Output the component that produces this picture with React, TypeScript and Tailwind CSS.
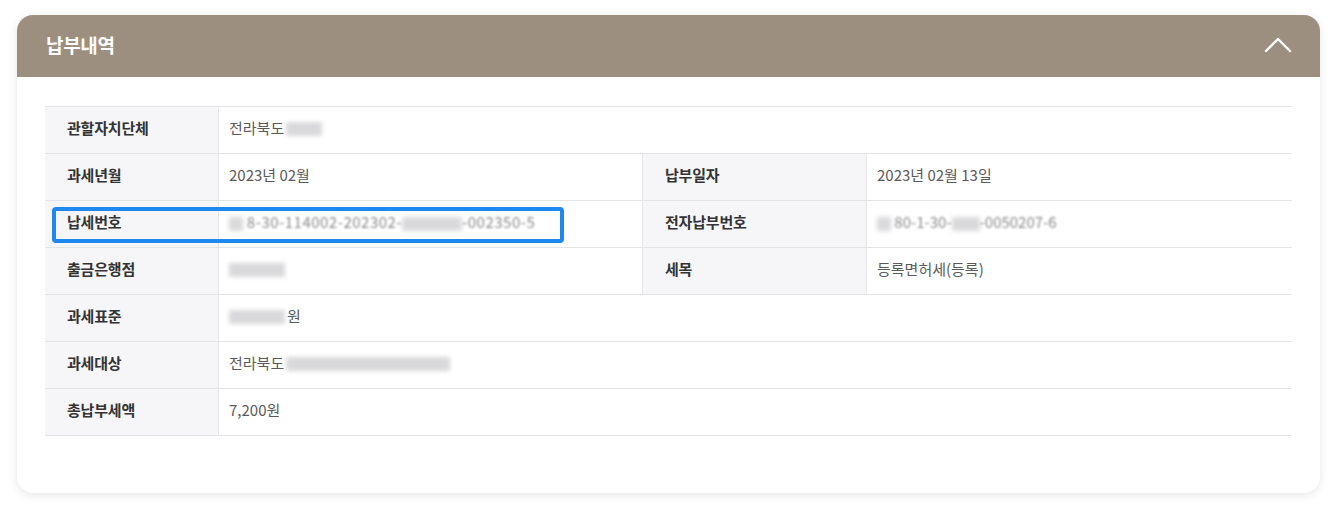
import React from 'react'

const font = { fontFamily: '"Noto Sans CJK KR", "Noto Sans", sans-serif' }

function Blur({ w, className = '' }: { w: number; className?: string }) {
  return (
    <span
      className={`inline-block h-[14px] align-middle bg-[#c9c9cc] blur-[2px] opacity-70 ${className}`}
      style={{ width: w }}
    />
  )
}

function Label({ children, wide = false }: { children: React.ReactNode; wide?: boolean }) {
  return (
    <div
      className={`${wide ? 'w-[224px]' : 'w-[174px]'} shrink-0 bg-[#f6f6f8] border-r border-[#e6e6e9] pl-[22px] pb-[3px] flex items-center text-[15px] font-bold text-[#333] tracking-[-0.2px]`}
    >
      {children}
    </div>
  )
}

function Value({ children, className = '' }: { children: React.ReactNode; className?: string }) {
  return (
    <div className={`pl-[10px] pb-[3px] flex items-center text-[15px] text-[#5a5a5a] ${className}`}>
      {children}
    </div>
  )
}

function Row({ children }: { children: React.ReactNode }) {
  return <div className="flex h-[47px] border-b border-[#e4e4e7]">{children}</div>
}

export default function App() {
  return (
    <div className="w-[1334px] h-[518px] bg-white pt-[15px] px-[17px]" style={font}>
      <div className="w-[1303px] h-[478px] rounded-[16px] bg-white shadow-[0_2px_10px_rgba(0,0,0,0.10)] overflow-hidden">
        <div className="h-[62px] bg-[#9c8f80] flex items-center justify-between pl-[29px] pr-[28px] pb-[2px]">
          <span className="text-white text-[19px] font-bold tracking-[-0.3px]">납부내역</span>
          <svg width="28" height="18" viewBox="0 0 28 18" fill="none">
            <path d="M2 15 L14 3 L26 15" stroke="white" strokeWidth="2.4" strokeLinecap="round" strokeLinejoin="round" />
          </svg>
        </div>

        <div className="px-[28px] pt-[29px]">
          <div className="relative border-t border-[#e4e4e7]">
            <Row>
              <Label>관할자치단체</Label>
              <Value>
                전라북도<Blur w={36} className="ml-[2px]" />
              </Value>
            </Row>
            <Row>
              <Label>과세년월</Label>
              <Value className="w-[424px] border-r border-[#e6e6e9]">2023년 02월</Value>
              <Label wide>납부일자</Label>
              <Value>2023년 02월 13일</Value>
            </Row>
            <Row>
              <Label>납세번호</Label>
              <Value className="w-[424px] border-r border-[#e6e6e9]">
                <span className="blur-[1px] text-[#8a8a8a] tracking-[0.5px]">
                  <Blur w={14} /> 8-30-114002-202302-<Blur w={60} />-002350-5
                </span>
              </Value>
              <Label wide>전자납부번호</Label>
              <Value>
                <span className="blur-[1px] text-[#8a8a8a]">
                  <Blur w={14} /> 80-1-30-<Blur w={28} />-0050207-6
                </span>
              </Value>
            </Row>
            <Row>
              <Label>출금은행점</Label>
              <Value className="w-[424px] border-r border-[#e6e6e9]">
                <Blur w={56} />
              </Value>
              <Label wide>세목</Label>
              <Value>등록면허세(등록)</Value>
            </Row>
            <Row>
              <Label>과세표준</Label>
              <Value>
                <Blur w={56} className="mr-[2px]" />원
              </Value>
            </Row>
            <Row>
              <Label>과세대상</Label>
              <Value>
                전라북도<Blur w={164} className="ml-[2px]" />
              </Value>
            </Row>
            <Row>
              <Label>총납부세액</Label>
              <Value>7,200원</Value>
            </Row>

            <div className="absolute left-[7px] top-[100px] w-[512px] h-[36px] border-[4px] border-[#1f88f0] rounded-[4px]" />
          </div>
        </div>
      </div>
    </div>
  )
}
